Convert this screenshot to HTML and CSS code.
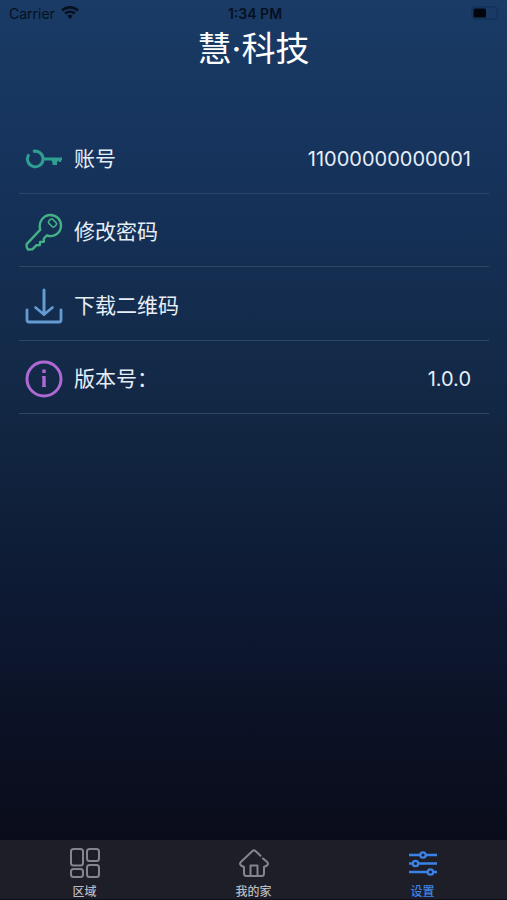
FILE: index.html
```html
<!DOCTYPE html>
<html lang="zh-CN">
<head>
<meta charset="utf-8">
<meta name="viewport" content="width=device-width, initial-scale=1">
<title>设置</title>
<link rel="stylesheet" href="styles.css">
</head>
<body>
<div class="status">
  <div class="carrier">
    <span>Carrier</span>
    <svg width="18" height="14" viewBox="0 0 18 14" fill="currentColor"><path d="M9 0C5.600 0 2.500 1.300.2 3.500L2.100 5.500C3.900 3.800 6.300 2.800 9 2.800s5.100 1 6.900 2.700l1.900-2C15.500 1.300 12.400 0 9 0z"/><path d="M9 4.500c-2.200 0-4.200.8-5.700 2.200l1.800 1.900C6.100 7.700 7.500 7.100 9 7.100s2.900.6 3.900 1.500l1.800-1.900C13.200 5.300 11.200 4.500 9 4.500z"/><path d="M9 8.800c-1 0-2 .4-2.700 1L9 13.200l2.700-3.400c-.7-.6-1.700-1-2.700-1z"/></svg>
  </div>
  <div class="time">1:34 PM</div>
  <div class="battery">
    <svg width="30" height="14" viewBox="0 0 30 14"><rect x="1" y=".8" width="25" height="12.400" rx="3" fill="none" stroke="#11305a" stroke-width="1.200"/><rect x="2.500" y="2.500" width="12.500" height="9" rx="1.500" fill="#02060c"/><path d="M27.500 4.800c1.300.5 1.300 3.900 0 4.400z" fill="#11305a"/></svg>
  </div>
</div>
<h1 class="title">慧·科技</h1>
<main class="content">
  <div class="list">
    <div class="row">
      <svg class="icon key-flat" viewBox="0 0 38 38" fill="none" stroke-width="3"><path d="M8 11.500A7.800 7.800 0 1 1 4 14.300"/><path d="M18 19H37"/><path d="M26.500 20h7v1.500h-1.500v3.500h-4.500v-2z" fill="currentColor" stroke="none"/><path d="M35 19v3" stroke-width="2"/></svg>
      <span class="label">账号</span>
      <span class="value">11000000000001</span>
    </div>
    <a class="row" href="#password">
      <svg class="icon key-line" viewBox="0 0 38 38" fill="none" stroke-width="2.400" stroke-linejoin="round" stroke-linecap="round"><path d="M15.300 16.600C12.900 9.500 18.200 2 25.500 2 31.700 2 36 7 36 12.500 36 20 28.700 25 22 22.400L18.800 25.500v3.200l-3.700.2-.3 3.200-3.500.2-4 4-4.300.2C1.500 35.200 1.300 34 1.700 31.100z"/><rect x="23.500" y="7.200" width="8" height="5.600" rx="1.800" stroke-width="1.600" transform="rotate(45 27.500 10)"/></svg>
      <span class="label">修改密码</span>
      <svg class="chevron" width="8" height="14" viewBox="0 0 8 14" fill="none"><path d="M1 1l6 6-6 6"/></svg>
    </a>
    <a class="row" href="#qrcode">
      <svg class="icon download" viewBox="0 0 38 38" fill="none" stroke-width="3" stroke-linecap="round"><path d="M19 3v24"/><path d="M10.500 20.500l8.500 7 8.500-7" stroke-width="2.600"/><path d="M2 23v10q0 2 2 2h30q2 0 2-2V23" stroke-width="2.800"/></svg>
      <span class="label">下载二维码</span>
      <svg class="chevron" width="8" height="14" viewBox="0 0 8 14" fill="none"><path d="M1 1l6 6-6 6"/></svg>
    </a>
    <div class="row">
      <svg class="icon info" viewBox="0 0 38 38" fill="none" stroke-width="3"><circle cx="19" cy="19" r="17"/><path d="M19 9.500v3.500M19 16v11" stroke-width="3.400"/><path d="M17 16.600h1M17 26.400h4" stroke-width="1.200"/></svg>
      <span class="label">版本号：</span>
      <span class="value">1.0.0</span>
    </div>
  </div>
</main>
<nav class="tabs">
  <a class="tab" href="#area">
    <svg width="32" height="32" viewBox="0 0 32 32" fill="none" stroke="currentColor" stroke-width="2"><rect x="2" y="2" width="12" height="16.500" rx="2.500"/><rect x="18" y="2" width="12" height="12" rx="2.500"/><rect x="2" y="22" width="12" height="8" rx="2.500"/><rect x="18" y="18" width="12" height="12" rx="2.500"/></svg>
    <span>区域</span>
  </a>
  <a class="tab" href="#home">
    <svg width="32" height="32" viewBox="0 0 32 32" fill="none" stroke="currentColor" stroke-width="2" stroke-linecap="round" stroke-linejoin="round"><path d="M22.500 8.800L17.500 4Q16 2.700 14.500 4L2.800 15Q1.200 17 3 18.500l3 1.500v6.500Q6 29 8.500 29h15q2.500 0 2.500-2.500V20l3-1.500q1.800-1.500.2-3.500L25 11.500"/><path d="M12.500 29V18.500h7V29"/></svg>
    <span>我的家</span>
  </a>
  <a class="tab active" href="#settings">
    <svg width="32" height="32" viewBox="0 0 32 32" fill="none" stroke="currentColor" stroke-width="2.300"><path d="M2 8h11M19 8h11M2 16.500h3.500M11.500 16.500H30M2 25h18.500M26.500 25H30"/><circle cx="16" cy="8" r="2.700"/><circle cx="8.500" cy="16.500" r="2.700"/><circle cx="23.500" cy="25" r="2.700"/></svg>
    <span>设置</span>
  </a>
</nav>
</body>
</html>
```
FILE: styles.css
```css
* { box-sizing: border-box; }

body {
  margin: 0;
  min-height: 100vh;
  display: flex;
  flex-direction: column;
  color: #e6eef7;
  font-family: Inter, "Noto Sans CJK SC", sans-serif;
  background: linear-gradient(#193b65 0, #16335c 18%, #122743 46%, #0d1932 67%, #0b0f20 86%, #0a0c1a 94%);
}

a { color: inherit; text-decoration: none; }

svg { flex: none; }

.status {
  display: grid;
  grid-template-columns: 1fr auto 1fr;
  align-items: center;
  height: 26px;
  padding: 0 6px 0 9px;
  font-size: 14px;
  color: #06101e;
}

.carrier { display: flex; align-items: center; gap: 6px; }
.time { font-weight: 600; }
.battery { display: flex; justify-content: flex-end; }

.title {
  margin: 0;
  font-size: 34px;
  line-height: 46px;
  font-weight: 400;
  text-align: center;
  color: #fff;
}

.content { flex: 1; padding: 48px 18px 0 19px; }

.list {
  display: grid;
  grid-template-rows: repeat(4, 1fr);
  min-height: 294px;
}

.row {
  display: flex;
  align-items: center;
  padding: 5px 18px 0 6px;
  border-bottom: 1px solid #2d4666;
}

.icon {
  width: 38px;
  height: 38px;
  margin-right: 11px;
  stroke: currentColor;
}

.key-flat { color: #2f9f91; }
.key-line { color: #43b085; }
.download { color: #659bd3; }
.info { color: #ae69d4; }

.label { flex: 1; font-size: 21px; line-height: 30px; }
.value { font-size: 20px; line-height: 30px; }
.chevron { margin-right: -12px; stroke: #17324b; }

.tabs {
  display: flex;
  height: 60px;
  background: #1e1e28;
  border-bottom: 1px solid #0e0e1a;
}

.tab {
  flex: 1;
  display: flex;
  flex-direction: column;
  align-items: center;
  padding-top: 7px;
  gap: 5px;
  font-size: 12px;
  line-height: 15px;
  font-weight: 500;
  color: #85858d;
}

.tab span { color: #b9b9c0; }
.tab.active, .tab.active span { color: #3b82e6; }
```
